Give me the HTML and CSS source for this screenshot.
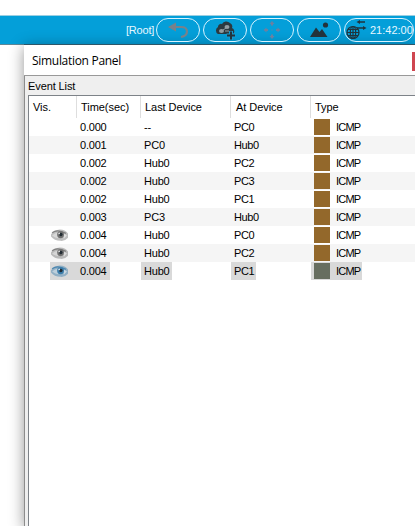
FILE: index.html
```html
<!DOCTYPE html>
<html lang="en">
<head>
<meta charset="utf-8">
<title>Simulation Panel</title>
<link rel="stylesheet" href="styles.css">
</head>
<body>
<svg width="0" height="0" class="defs">
  <symbol id="eye" viewBox="0 0 16 12">
    <path d="M0 5Q2 1 7 .5Q13 0 16 4V8Q13 11.500 9 11Q3 11 0 7Z" fill="currentColor" opacity=".45"/>
    <path d="M1 3.500Q6-.5 14 4" fill="none" stroke="currentColor" stroke-width="1.200" opacity=".8"/>
    <path d="M1 6Q4 3.500 6 3.500L7 8.500Q4 8.500 1 6Z" fill="#fff" opacity=".4"/>
    <path d="M12 4L15 6L12 9Z" fill="#fff" opacity=".5"/>
    <circle cx="9" cy="5.300" r="3.200" fill="currentColor"/>
    <circle cx="9.300" cy="5" r="1.600" fill="#222c33"/>
    <circle cx="7.700" cy="4" r=".8" fill="#fff" opacity=".8"/>
  </symbol>
</svg>
<header class="toolbar">
  <span class="root">[Root]</span>
  <div class="pill"><svg width="42" height="21"><path d="M17 8H24Q30 8 30 12.500Q30 17 24 18" fill="none" stroke="#77818a" stroke-width="2.200"/><path d="M11 8L19 3.500V12.500Z" fill="#77818a"/></svg></div>
  <div class="pill"><svg width="42" height="21"><path d="M14 15A4 4 0 0 1 14 8A3 3 0 0 1 18 5A5 5 0 0 1 26 4A4 4 0 0 1 28 9A3.500 3.500 0 0 1 29 15Z" fill="#2b3940"/><g fill="#929da2"><ellipse cx="23" cy="8" rx="2.500" ry="2"/><ellipse cx="17.500" cy="12" rx="2.500" ry="2"/></g><path d="M19 11L22 9M21 12H25" stroke="#929da2"/><path d="M27 12V21M22.500 16.500H31.500" stroke="#169bd0" stroke-width="4"/><path d="M27 12.500V20.500M23 16.500H31" stroke="#23333b" stroke-width="2"/></svg></div>
  <div class="pill"><svg width="42" height="21"><g fill="#6c80a0"><path d="M21 2L23.500 5H22V6.500H20V5H18.500Z"/><path d="M21 20L23.500 17H22V15.500H20V17H18.500Z"/><path d="M12.500 11L15.500 8.500V10H17V12H15.500V13.500Z"/><path d="M29.500 11L26.500 8.500V10H25V12H26.500V13.500Z"/></g><path d="M20.500 11H21.500" stroke="#6c80a0"/></svg></div>
  <div class="pill"><svg width="42" height="21"><path d="M12 18L18 8.500L21.500 13L24 10L29.500 18Z" fill="#23333b"/><circle cx="27.500" cy="6" r="2.600" fill="#23333b"/></svg></div>
  <div class="pill clock"><svg width="23" height="21"><g fill="none" stroke="#20333c" stroke-width="1.200"><circle cx="8" cy="13.500" r="6"/><ellipse cx="8" cy="13.500" rx="2.700" ry="6"/><path d="M8 7.500V19.500M2 13.500H14M3 10.500H13M3 16.500H13"/></g><path d="M14 3H20M12 9H19" stroke="#20333c" stroke-width="1.300"/><path d="M11.500 3L15 1V5ZM21.500 9L18 7V11Z" fill="#20333c"/></svg><span>21:42:00</span></div>
</header>
<main class="workspace">
  <section class="window">
    <div class="titlebar"><h1>Simulation Panel</h1><i class="close"></i></div>
    <div class="panel">
      <h2>Event List</h2>
      <div class="list">
        <div class="row head"><span>Vis.</span><span>Time(sec)</span><span>Last Device</span><span>At Device</span><span>Type</span></div>
        <div class="row"><span></span><span>0.000</span><span>--</span><span>PC0</span><span><i></i>ICMP</span></div>
        <div class="row"><span></span><span>0.001</span><span>PC0</span><span>Hub0</span><span><i></i>ICMP</span></div>
        <div class="row"><span></span><span>0.002</span><span>Hub0</span><span>PC2</span><span><i></i>ICMP</span></div>
        <div class="row"><span></span><span>0.002</span><span>Hub0</span><span>PC3</span><span><i></i>ICMP</span></div>
        <div class="row"><span></span><span>0.002</span><span>Hub0</span><span>PC1</span><span><i></i>ICMP</span></div>
        <div class="row"><span></span><span>0.003</span><span>PC3</span><span>Hub0</span><span><i></i>ICMP</span></div>
        <div class="row"><span><svg class="eye"><use href="#eye"/></svg></span><span>0.004</span><span>Hub0</span><span>PC0</span><span><i></i>ICMP</span></div>
        <div class="row"><span><svg class="eye"><use href="#eye"/></svg></span><span>0.004</span><span>Hub0</span><span>PC2</span><span><i></i>ICMP</span></div>
        <div class="row selected"><span><svg class="eye"><use href="#eye"/></svg></span><span>0.004</span><span>Hub0</span><span>PC1</span><span><i></i>ICMP</span></div>
      </div>
    </div>
  </section>
</main>
</body>
</html>
```
FILE: styles.css
```css
* { box-sizing: border-box; }
body {
  margin: 0;
  height: 526px;
  padding-top: 15px;
  overflow: hidden;
  background: #fff;
  color: #000;
  font: 11px/18px "Liberation Sans", Arial, sans-serif;
}
.defs { display: block; position: absolute; }
.toolbar {
  height: 30px;
  padding: 2px 0 0 126px;
  display: flex;
  gap: 3px;
  background: #049fd9;
  border-top: 1px solid #9bcfe2;
  border-bottom: 1px solid #5e8797;
}
.root { width: 27px; line-height: 24px; color: #e6f7ff; white-space: nowrap; letter-spacing: -.2px; }
.pill {
  flex: none;
  width: 44px;
  height: 24px;
  border: 1px solid #d8f3ff;
  border-radius: 12px;
}
.pill svg { display: block; flex: none; }
.clock { width: 70px; display: flex; gap: 2px; color: #e6f7ff; line-height: 23px; }
.workspace { height: 482px; margin-top: -1px; padding-left: 24px; }
.window {
  height: 482px;
  background: #fff;
  box-shadow: 0 3px 14px rgba(0, 0, 0, .42);
}
.titlebar {
  height: 32px;
  display: flex;
  justify-content: space-between;
  border-top: 1px solid #2d5668;
  border-bottom: 1px solid #999;
}
h1 { margin: 0; padding-left: 8px; font: 12px/31px "Open Sans", sans-serif; letter-spacing: -.3px; }
.close { width: 3px; height: 19px; margin-top: 7px; background: #cf4650; }
.panel { height: 450px; padding-left: 3px; border-left: 1px solid #8c8c8c; background: #efefef; }
h2 { margin: 0; height: 19px; font: 11px/20px "Liberation Sans", sans-serif; letter-spacing: -.1px; }
.list { height: 431px; border: solid #7d8288; border-width: 1px 0 0 1px; background: #fff; }
.row { height: 18px; display: grid; grid-template-columns: 48px 64px 90px 80px 1fr; }
.row:nth-child(odd):not(.head):not(.selected) { background: #f5f5f5; }
.row > span { height: 18px; padding-left: 3px; display: flex; align-items: center; white-space: nowrap; justify-self: start; letter-spacing: -.2px; }
.row > span:nth-child(4) { letter-spacing: -.4px; }
.row > span:nth-child(5) { padding-left: 2px; letter-spacing: -.8px; }
.row > span i { width: 16px; height: 16px; margin: 0 6px 0 1px; background: #93682b; }
.row.head { height: 22px; }
.row.head > span { height: 22px; padding-left: 4px; justify-self: stretch; border-right: 1px solid #dedede; letter-spacing: -.05px; }
.row.head > span:nth-child(4) { padding-left: 5px; }
.row.head > span:last-child { border: 0; }
.row > span:first-child { padding-left: 22px; }
.row.head > span:first-child { padding-left: 4px; }
.eye { width: 17px; height: 13px; color: #707070; }
.selected > span { background: #d9d9d9; }
.selected > span:first-child { margin-left: 21px; padding-left: 1px; width: 27px; }
.selected > span:nth-child(2) { width: 33px; }
.selected > span:nth-child(3) { width: 31px; }
.selected > span:nth-child(4) { width: 25px; }
.selected > span:nth-child(5) { width: 51px; }
.selected > span i { background: #676e60; }
.selected .eye { color: #3a7caa; }
```
